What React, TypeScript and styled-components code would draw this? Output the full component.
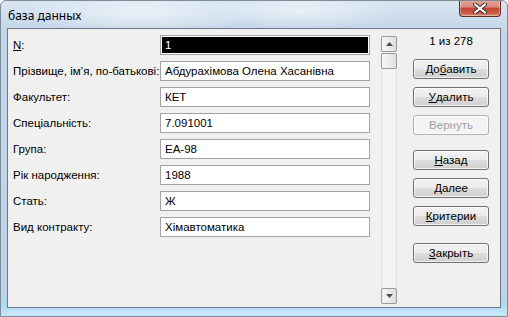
import React from "react";
import styled, { createGlobalStyle } from "styled-components";

const GlobalStyle = createGlobalStyle`
  html, body {
    margin: 0;
    padding: 0;
    background: #ffffff;
  }
  body {
    font-family: "Liberation Sans", Arial, sans-serif;
  }
`;

const Window = styled.div`
  width: 508px;
  height: 317px;
  box-sizing: border-box;
  display: flex;
  flex-direction: column;
  border: 1px solid #7d8a98;
  border-radius: 6px 6px 0 0;
  background:
    radial-gradient(ellipse 120px 20px at 140px 12px, rgba(255, 255, 255, 0.55), transparent),
    radial-gradient(ellipse 90px 18px at 300px 10px, rgba(255, 255, 255, 0.5), transparent),
    linear-gradient(180deg, #d9e6f2 0%, #c3d5e8 10%, #bfd3e8 92%, #a9d9f3 96%, #c9e8f8 100%);
  overflow: hidden;
`;

const TitleBar = styled.div`
  height: 27px;
  display: flex;
  align-items: flex-start;
  justify-content: space-between;
  padding: 0 6px 0 7px;
`;

const Title = styled.span`
  font-family: "Noto Sans", "Open Sans", sans-serif;
  font-size: 12px;
  line-height: 14px;
  color: #000;
  margin-top: 8px;
`;

const CloseButton = styled.div`
  width: 42px;
  height: 17px;
  box-sizing: border-box;
  margin-top: -1px;
  border: 1px solid #5d2a22;
  border-top: none;
  border-radius: 0 0 4px 4px;
  background: linear-gradient(180deg, #e6a597 0%, #d98a7d 45%, #c0452f 50%, #c85a46 80%, #dc8c73 100%);
  box-shadow: inset 0 0 0 1px rgba(255, 255, 255, 0.35);
  display: flex;
  align-items: center;
  justify-content: center;
`;

const Client = styled.div`
  flex: 1;
  margin: 0 6px 8px 6px;
  border: 1px solid #6d7986;
  background: #f0f0f0;
  display: flex;
  padding: 0 11px 0 5px;
  font-size: 11.5px;
  color: #000;
`;

const Fields = styled.div`
  display: grid;
  grid-template-columns: 147px 210px;
  grid-auto-rows: 20px;
  row-gap: 6px;
  align-content: start;
  padding-top: 6px;
`;

const Label = styled.div`
  display: flex;
  align-items: center;
  white-space: nowrap;
`;

const Field = styled.div`
  box-sizing: border-box;
  border: 1px solid #a3a3a3;
  background: #fff;
  display: flex;
  align-items: center;
  padding: 0 4px;
  white-space: nowrap;
  overflow: hidden;
`;

const SelectedField = styled(Field)`
  padding: 1px;
`;

const Selection = styled.div`
  flex: 1;
  align-self: stretch;
  background: #000;
  color: #fff;
  display: flex;
  align-items: center;
  padding-left: 3px;
`;

const ScrollBar = styled.div`
  width: 16px;
  margin: 7px 0 3px 11px;
  display: flex;
  flex-direction: column;
  justify-content: space-between;
  background: linear-gradient(90deg, #dcdcdc 0%, #f3f3f3 12%, #f3f3f3 88%, #dcdcdc 100%);
`;

const ScrollTop = styled.div`
  display: flex;
  flex-direction: column;
  gap: 1px;
`;

const ScrollPart = styled.div`
  height: 16px;
  box-sizing: border-box;
  border: 1px solid #9a9a9a;
  border-radius: 2px;
  background: linear-gradient(90deg, #f6f6f6 0%, #ececec 50%, #dedede 100%);
  display: flex;
  align-items: center;
  justify-content: center;
`;

const Side = styled.div`
  width: 76px;
  margin-left: 16px;
  display: flex;
  flex-direction: column;
  align-items: stretch;
  padding-top: 5px;
`;

const Counter = styled.div`
  text-align: center;
  height: 14px;
  line-height: 14px;
  margin-bottom: 11px;
`;

const Button = styled.div<{ $gap?: number; $disabled?: boolean }>`
  height: 20px;
  box-sizing: border-box;
  margin-top: ${(p) => p.$gap ?? 8}px;
  border: 1px solid ${(p) => (p.$disabled ? "#adb2b5" : "#707070")};
  border-radius: 3px;
  background: ${(p) =>
    p.$disabled
      ? "#f4f4f4"
      : "linear-gradient(180deg, #f2f2f2 0%, #ebebeb 48%, #dddddd 52%, #cfcfcf 100%)"};
  box-shadow: inset 0 0 0 1px rgba(255, 255, 255, 0.7);
  color: ${(p) => (p.$disabled ? "#a0a0a0" : "#000")};
  display: flex;
  align-items: center;
  justify-content: center;
`;

const fields: [React.ReactNode, string][] = [
  ["Прізвище, ім’я, по-батькові:", "Абдурахімова Олена Хасанівна"],
  ["Факультет:", "КЕТ"],
  ["Спеціальність:", "7.091001"],
  ["Група:", "ЕА-98"],
  ["Рік народження:", "1988"],
  ["Стать:", "Ж"],
  ["Вид контракту:", "Хімавтоматика"],
];

const Arrow = ({ up }: { up?: boolean }) => (
  <svg width="7" height="4" viewBox="0 0 7 4">
    <path d={up ? "M0 4 L3.5 0 L7 4 Z" : "M0 0 L3.5 4 L7 0 Z"} fill="#4d4d4d" />
  </svg>
);

export default function App() {
  return (
    <>
      <GlobalStyle />
      <Window>
        <TitleBar>
          <Title>база данных</Title>
          <CloseButton>
            <svg width="14" height="11" viewBox="0 0 14 11">
              <path d="M2 1.5 L12 9.5 M12 1.5 L2 9.5" stroke="#3a2a2a" strokeWidth="4" strokeLinecap="round" />
              <path d="M2 1.5 L12 9.5 M12 1.5 L2 9.5" stroke="#ffffff" strokeWidth="2.2" strokeLinecap="round" />
            </svg>
          </CloseButton>
        </TitleBar>
        <Client>
          <Fields>
            <Label>
              <span>
                <u>N</u>:
              </span>
            </Label>
            <SelectedField>
              <Selection>1</Selection>
            </SelectedField>
            {fields.map(([label, value], i) => (
              <React.Fragment key={i}>
                <Label>{label}</Label>
                <Field>{value}</Field>
              </React.Fragment>
            ))}
          </Fields>
          <ScrollBar>
            <ScrollTop>
              <ScrollPart>
                <Arrow up />
              </ScrollPart>
              <ScrollPart />
            </ScrollTop>
            <ScrollPart>
              <Arrow />
            </ScrollPart>
          </ScrollBar>
          <Side>
            <Counter>1 из 278</Counter>
            <Button $gap={0}>
              До<u>б</u>авить
            </Button>
            <Button>
              <u>У</u>далить
            </Button>
            <Button $disabled>Вернуть</Button>
            <Button $gap={15}>
              <u>Н</u>азад
            </Button>
            <Button>
              <u>Д</u>алее
            </Button>
            <Button>
              <u>К</u>ритерии
            </Button>
            <Button $gap={17}>
              <u>З</u>акрыть
            </Button>
          </Side>
        </Client>
      </Window>
    </>
  );
}
